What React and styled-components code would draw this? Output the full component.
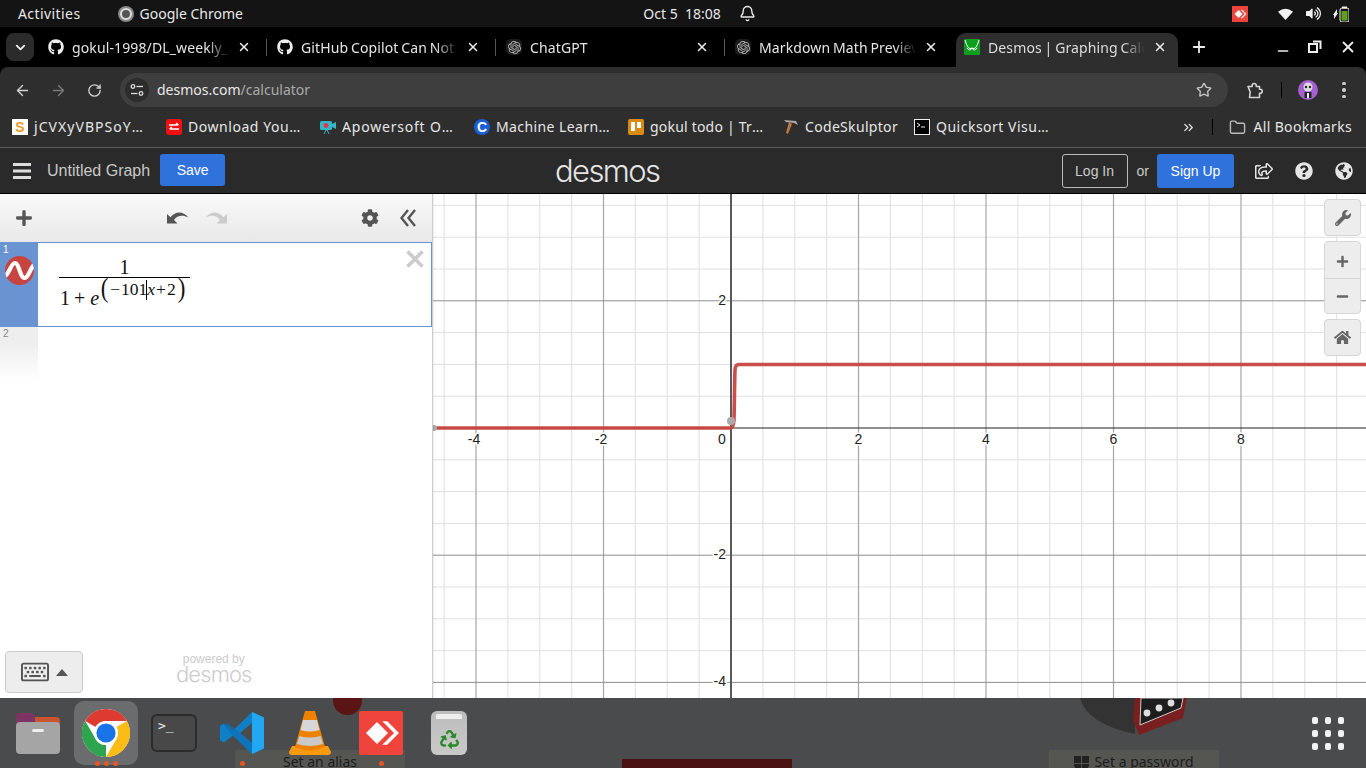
import React from 'react';
import styled, { createGlobalStyle } from 'styled-components';
import { FaGithub, FaPlus, FaWrench, FaMinus, FaHome, FaRegShareSquare, FaQuestionCircle, FaGlobeAmericas, FaRegKeyboard, FaVolumeUp, FaRecycle, FaCog } from 'react-icons/fa';
import { SiOpenai } from 'react-icons/si';
import { ArrowLeft, ArrowRight, RotateCw, Star, ChevronDown, X, Plus, Minus, ChevronsRight, Folder, Bell } from 'lucide-react';

const Global = createGlobalStyle`
  html, body { margin: 0; padding: 0; width: 1366px; height: 768px; overflow: hidden; background: #000; }
  * { box-sizing: border-box; }
  #root { width: 1366px; height: 768px; }
`;

const UI = '"Noto Sans", "Open Sans", sans-serif';
const AR = '"Liberation Sans", Arial, sans-serif';

const Screen = styled.div`
  width: 1366px; height: 768px; display: flex; flex-direction: column; font-family: ${UI};
`;

/* GNOME top bar */
const TopBar = styled.div`
  height: 27px; background: #141414; color: #e8e8e8; font-size: 14px; display: grid;
  grid-template-columns: 1fr auto 1fr; align-items: center; padding: 0 17px 0 18px;
`;
const TopLeft = styled.div`display: flex; align-items: center; gap: 37px;`;
const Activities = styled.span`letter-spacing: .42px;`;
const AppName = styled.div`display: flex; align-items: center; gap: 6px;`;
const ChromeMono = styled.span`
  width: 16px; height: 16px; border-radius: 50%; background: #888; display: flex; align-items: center; justify-content: center;
  &::after { content: ''; width: 8px; height: 8px; border-radius: 50%; border: 2px solid #ddd; background: #555; }
`;
const Clock = styled.div`display: flex; align-items: center; gap: 18px; padding-left: 32px;`;
const Tray = styled.div`display: flex; align-items: center; justify-content: flex-end; color: #f2f2f2;`;
const TrayBadge = styled.span`
  width: 16px; height: 16px; background: #ef443b; display: flex; align-items: center; justify-content: center; margin-right: 29px;
`;
const TrayIcon = styled.span`display: flex; width: 16px; justify-content: center; margin-right: 12px;`;

/* Tab strip */
const TabStrip = styled.div`
  height: 40px; background: #000; display: flex; padding-left: 6px; color: #e6e6e6;
`;
const TabMenu = styled.div`
  width: 28px; height: 28px; margin-top: 6px; margin-right: 6px; border-radius: 8px; background: #2b2b2b;
  display: flex; align-items: center; justify-content: center; color: #eee;
`;
const Tab = styled.div`
  width: 229px; height: 40px; padding: 0 7px 0 8px; display: flex; align-items: center; position: relative; flex: none;
  ${p => p.$sep && `&::after { content: ''; position: absolute; left: 226px; top: 12px; width: 1px; height: 17px; background: #555; }`}
`;
const ActiveTab = styled(Tab)`
  width: 222px; height: 34px; margin-top: 6px; padding-bottom: 6px; background: #2e2e2e; border-radius: 10px 10px 0 0; color: #ddd;
`;
const Fav = styled.span`
  width: 16px; height: 16px; flex: none; display: flex; align-items: center; justify-content: center; color: ${p => p.$c || '#eee'};
  background: ${p => p.$bg || 'transparent'}; border-radius: 5px;
`;
const TabTitle = styled.span`
  margin-left: 8px; width: 157px; font-size: 14px; letter-spacing: .12px; word-spacing: -1px; white-space: nowrap; overflow: hidden;
  mask-image: linear-gradient(to right, #000 86%, transparent 100%);
`;
const TabClose = styled.span`display: flex; margin-left: 7px; color: #eee; width: 16px; justify-content: center;`;
const StripRight = styled.div`
  flex: 1; display: flex; align-items: center; color: #eee;
`;
const NewTab = styled.span`display: flex; margin-left: 12px;`;
const WinBtns = styled.div`
  margin-left: auto; display: flex; align-items: center; gap: 17px; padding-right: 9px;
`;
const MinIcon = styled.span`display: flex; padding-top: 7px;`;

/* Toolbar */
const Toolbar = styled.div`
  height: 40px; background: #2e2e2e; display: flex; align-items: flex-end; padding: 0 4px 0 12px; border-radius: 8px 8px 0 0; color: #c8c8c8;
`;
const NavBtn = styled.span`
  width: 20px; height: 34px; margin-right: 16px; display: flex; align-items: center; justify-content: center;
  color: ${p => p.$dim ? '#777' : '#cfcfcf'};
`;
const Omni = styled.div`
  width: 1108px; height: 34px; background: #3e3e3e; border-radius: 17px; display: flex; align-items: center; padding-left: 5px; font-size: 14px;
  color: #e8e8e8;
`;
const TuneWrap = styled.span`
  width: 24px; height: 24px; border-radius: 50%; background: #2c2c2c; display: flex; align-items: center; justify-content: center; margin-right: 8px;
`;
const UrlText = styled.span`padding-bottom: 2px;`;
const UrlDim = styled.span`color: #aaa;`;
const OmniStar = styled.span`margin-left: auto; margin-right: 16px; display: flex; color: #c8c8c8;`;
const TbRight = styled.div`flex: 1; height: 34px; display: flex; align-items: center; padding-left: 18px;`;
const TbSep = styled.span`width: 1px; height: 16px; background: #000; margin: 0 16px 0 18px;`;
const Avatar = styled.span`
  width: 20px; height: 20px; border-radius: 50%; background: #a45fd0; display: flex; align-items: center; justify-content: center; flex: none; overflow: hidden;
`;
const Dots = styled.span`
  display: flex; flex-direction: column; gap: 3px; margin-left: 24px;
  & i { width: 3.5px; height: 3.5px; border-radius: 50%; background: #ccc; display: block; }
`;

/* Bookmarks */
const BookBar = styled.div`
  height: 41px; background: #2e2e2e; border-bottom: 1px solid #5a5a5a; display: flex; align-items: center; padding-left: 12px; color: #e6e6e6; font-size: 14px; letter-spacing: .32px;
`;
const BM = styled.div`
  width: ${p => p.$w}px; flex: none; display: flex; align-items: center; gap: 6px; white-space: nowrap;
`;
const BMText = styled.span`padding-bottom: 2px; letter-spacing: ${p => p.$ls || .32}px;`;
const Ell = styled.span`letter-spacing: 1.6px;`;
const BMIcon = styled.span`
  width: 16px; height: 16px; flex: none; display: flex; align-items: center; justify-content: center;
  background: ${p => p.$bg || 'transparent'}; color: ${p => p.$c || '#fff'}; border-radius: ${p => p.$r || '0'};
  font: bold 14px ${AR}; letter-spacing: 0; overflow: hidden;
`;
const BMRight = styled.div`
  margin-left: auto; display: flex; align-items: center; padding-right: 14px;
`;
const BMSep = styled.span`width: 1px; height: 16px; background: #000; margin: 0 16px 0 16px;`;
const BMAll = styled.span`margin-left: 8px; padding-bottom: 2px;`;

/* Desmos header */
const DHeader = styled.div`
  height: 46px; background: #2a2a2a; border-bottom: 1px solid #000; display: grid; grid-template-columns: 542px auto 1fr; align-items: center; font-family: ${AR};
  padding: 0 13px; color: #ddd; flex: none;
`;
const DLeft = styled.div`display: flex; align-items: center;`;
const Burger = styled.span`display: flex; margin-right: 16px;`;
const Untitled = styled.span`font-size: 16px; color: #c8c8c8; margin-right: 10px;`;
const BlueBtn = styled.span`
  height: ${p => p.$h}px; width: ${p => p.$w}px; background: #2f72dc; border-radius: 3px; color: #fff; font-size: 14px;
  display: flex; align-items: center; justify-content: center; margin-bottom: ${p => p.$up || 0}px;
`;
const Logo = styled.span`
  font-family: Inter, Lato, sans-serif; font-weight: 300; color: ${p => p.$c || '#e4e4e4'}; font-size: ${p => p.$s}px; line-height: ${p => p.$lh || 1};
  letter-spacing: ${p => p.$ls}px;
`;
const DRight = styled.div`display: flex; align-items: center; justify-content: flex-end;`;
const LoginBtn = styled.span`
  width: 66px; height: 34px; border: 1px solid #bbb; border-radius: 3px; font-size: 14px; color: #ccc; display: flex; align-items: center; justify-content: center;
`;
const Or = styled.span`font-size: 14px; color: #ccc; margin: 0 8px 0 9px;`;
const HIcon = styled.span`display: flex; color: #e6e6e6; margin-left: ${p => p.$ml}px;`;

/* Main */
const Main = styled.div`flex: 1; min-height: 0; display: flex; background: #fff; font-family: ${AR};`;
const Panel = styled.div`
  width: 433px; flex: none; border-right: 1px solid #ccc; display: flex; flex-direction: column; position: relative; background: #fff;
  box-shadow: 1px 0 2px rgba(0,0,0,.08); z-index: 1;
`;
const PTools = styled.div`
  height: 48px; background: linear-gradient(#fafafa, #e8e8e8); display: flex; align-items: center; padding: 0 0 1px 15px; color: #555; flex: none;
`;
const UndoGroup = styled.div`display: flex; gap: 16px; margin-left: 134px;`;
const PToolsRight = styled.div`margin-left: auto; display: flex; align-items: center; gap: 21px; padding-right: 16px;`;
const ExprRow = styled.div`
  height: 85px; border: 1.5px solid #6a94d1; display: flex; flex: none; position: relative;
`;
const Gutter = styled.div`
  width: 37px; background: #6a94d1; color: #fff; font-size: 10px; padding: 1px 0 0 2px; position: relative; flex: none;
`;
const GraphSwatch = styled.span`position: absolute; left: 3px; top: 12px; display: flex;`;
const MathWrap = styled.div`
  padding: 11px 0 0 21px; font-family: "Liberation Serif", "Times New Roman", serif; color: #111; font-size: 20px;
`;
const Frac = styled.div`display: inline-flex; flex-direction: column; align-items: center; width: 131px;`;
const Num = styled.div`line-height: 27px; border-bottom: 1px solid #000; width: 100%; text-align: center; height: 24px;`;
const Den = styled.div`display: flex; align-items: flex-start; padding: 0 0 0 1px; width: 100%; height: 36px; white-space: nowrap;`;
const DenBase = styled.span`margin-top: 9px; line-height: 23px; display: flex;`;
const Op = styled.span`margin: ${p => p.$m};`;
const Sup = styled.span`font-size: 17.5px; line-height: 20px; margin-top: 1px; display: inline-flex; align-items: center; position: relative;`;
const Paren = styled.span`
  font-size: 27px; line-height: 20px; margin: ${p => p.$m}; transform: scaleX(.85) translateY(-1px); display: inline-block;
`;
const Caret = styled.span`display: inline-block; width: 1px; height: 20px; background: #000; margin: 0 0 0 -1px; position: relative; top: 1px;`;
const DelBtn = styled.span`position: absolute; right: 7px; top: 7px; display: flex;`;
const EmptyRow = styled.div`height: 54px; display: flex; flex: none;`;
const EmptyGutter = styled.div`
  width: 38px; background: linear-gradient(#eee 30%, #fff); color: #888; font-size: 10px; padding: 1px 0 0 3px;
`;
const PFoot = styled.div`
  margin-top: auto; height: 53px; display: flex; align-items: flex-start; padding: 6px 0 0 5px;
`;
const KeyBtn = styled.div`
  width: 78px; height: 42px; background: #ededed; border: 1px solid #ccc; border-radius: 4px; display: flex; align-items: center; justify-content: center; gap: 7px; color: #555;
`;
const Tri = styled.span`
  width: 0; height: 0; border-left: 6.5px solid transparent; border-right: 6.5px solid transparent; border-bottom: 7px solid #555;
`;
const Powered = styled.div`
  margin-left: 93px; padding-top: 2px; display: flex; flex-direction: column; align-items: center; color: #ccc; font-size: 12px; line-height: 13px;
`;

const Graph = styled.div`flex: 1; position: relative; overflow: hidden;`;
const GraphSvg = styled.svg`display: block; position: absolute; left: 0; top: 0;`;
const Ctl = styled.div`
  position: absolute; right: 5px; top: ${p => p.$t}px; width: 37px; height: ${p => p.$h}px; background: #ededed; border: 1px solid #d6d6d6; border-radius: 4px;
  color: #666; display: flex; flex-direction: column;
`;
const CtlCell = styled.span`
  flex: 1; display: flex; align-items: center; justify-content: center; padding-top: ${p => p.$pt || 0}px;
  & + & { border-top: 1px solid #d6d6d6; }
`;

/* Dock */
const Dock = styled.div`
  height: 70px; flex: none; background: #4a4b4d; display: flex; align-items: center; padding-left: 4px; position: relative; overflow: hidden;
`;
const DockItem = styled.div`
  width: 68px; height: 64px; flex: none; margin-left: ${p => p.$ml || 0}px; display: flex; align-items: center; justify-content: center; position: relative; z-index: 1;
`;
const ActiveBg = styled.span`position: absolute; left: 2px; top: 0; width: 64px; height: 64px; border-radius: 10px; background: #6b6c6e;`;
const LogoLift = styled.span`position: relative; display: flex;`;
const Pips = styled.span`
  position: absolute; bottom: -1px; left: 0; right: 0; display: flex; justify-content: center; gap: 4px;
  & i { width: 5px; height: 5px; background: #e95420; border-radius: 50%; display: block; }
`;
const AppGrid = styled.div`
  margin-left: auto; margin-right: 22px; display: grid; grid-template-columns: repeat(3, 6px); grid-auto-rows: 7px; gap: 6px 7px; position: relative; z-index: 1;
  & i { background: #f2f2f2; border-radius: 2px; display: block; }
`;
const GhostBox = styled.div`
  position: absolute; left: ${p => p.$l}px; top: ${p => p.$t}px; width: 170px; height: 40px; background: ${p => p.$bg || '#555652'}; color: #1c1c1c;
  font: 14px ${UI}; display: flex; justify-content: center; gap: 5px; padding-top: 2px;
`;
const GhostBlob = styled.span`
  position: absolute; left: 333px; top: -12px; width: 29px; height: 29px; border-radius: 50%; background: #5a1414;
`;
const GhostShield = styled.svg`position: absolute; left: 1075px; top: 0;`;
const GhostShieldIcon = styled.svg`margin-top: 4px;`;

const xs = []; for (let i = -9; i <= 20; i++) xs.push(i);
const ux = v => 298 + v * 63.75;
const uy = v => 234 - v * 63.6;

function Plot() {
  const W = 933, H = 504;
  return (
    <GraphSvg width={W} height={H} viewBox={`0 0 ${W} ${H}`}>
      {xs.map(i => i % 4 !== 0 && <line key={'vm' + i} x1={ux(i / 2)} x2={ux(i / 2)} y1="0" y2={H} stroke="#e4e4e4" strokeWidth="1.2" />)}
      {xs.map(i => i % 4 !== 0 && <line key={'hm' + i} y1={uy(i / 2)} y2={uy(i / 2)} x1="0" x2={W} stroke="#e0e0e0" strokeWidth="1" />)}
      {[-4, -2, 2, 4, 6, 8].map(v => <line key={'vM' + v} x1={ux(v)} x2={ux(v)} y1="0" y2={H} stroke="#a6a6a6" strokeWidth="1.2" />)}
      {[4, 2, -2, -4].map(v => <line key={'hM' + v} y1={uy(v)} y2={uy(v)} x1="0" x2={W} stroke="#8f8f8f" strokeWidth="1" />)}
      <line x1="0" x2={W} y1="234" y2="234" stroke="#222" strokeWidth="1.2" />
      <line x1="298" x2="298" y1="0" y2={H} stroke="#5a5a5a" strokeWidth="2" />
      <path d="M0 234H297.5C299.5 234 300.5 232 301 226C301.5 205 301.5 190 302 176C302.2 171.5 303.5 170.5 306 170.5H933" fill="none" stroke="#c74440" strokeWidth="3.6" opacity=".95" />
      <circle cx="298" cy="227" r="4" fill="#aaa" />
      <circle cx="1" cy="234" r="3" fill="#aaa" />
      <g fontFamily={AR} fontSize="14" fill="#222" stroke="#fff" strokeWidth="3" paintOrder="stroke" strokeLinejoin="round">
        {[[-4, 41], [-2, 168], [0, 289], [2, 425.5], [4, 553], [6, 680.5], [8, 808]].map(([v, x]) => (
          <text key={v} x={x} y="250" textAnchor="middle">{v}</text>
        ))}
        <text x="293" y="111" textAnchor="end">2</text>
        <text x="293" y="365" textAnchor="end">-2</text>
        <text x="293" y="492" textAnchor="end">-4</text>
      </g>
    </GraphSvg>
  );
}

const Swatch = () => (
  <svg width="31" height="31" viewBox="0 0 31 31">
    <defs><clipPath id="cc"><circle cx="15.5" cy="15.5" r="14.5" /></clipPath></defs>
    <circle cx="15.5" cy="15.5" r="14.5" fill="#c74440" />
    <path d="M0 22C5 20 7 8 11 8C15 8 16 23 20.5 23C25 23 26 12 31 9" fill="none" stroke="#fff" strokeWidth="4.2" clipPath="url(#cc)" />
  </svg>
);

const CHROME_RED = 'M24 0A24 24 0 0 1 44.8 12H24A12 12 0 0 0 13.6 18L3.2 12A24 24 0 0 1 24 0Z';
const ChromeLogo = () => (
  <svg width="48" height="48" viewBox="0 0 48 48">
    <circle cx="24" cy="24" r="24" fill="#fff" />
    <path d={CHROME_RED} fill="#dd3b30" />
    <path d={CHROME_RED} fill="#fbbc15" transform="rotate(120 24 24)" />
    <path d={CHROME_RED} fill="#2ea44f" transform="rotate(240 24 24)" />
    <circle cx="24" cy="24" r="12" fill="#fff" />
    <circle cx="24" cy="24" r="9.6" fill="#1a73e8" />
  </svg>
);

const FilesIcon = () => (
  <svg width="46" height="42" viewBox="0 0 46 42">
    <path d="M1 5Q1 1 5 1H17L21 5H41Q45 5 45 9V20H1Z" fill="#7d3464" />
    <path d="M20 5H41Q45 5 45 9V16H20Z" fill="#c8552f" />
    <rect x="1" y="10" width="44" height="32" rx="4" fill="#a5a5a5" />
    <rect x="17" y="17" width="12" height="3" rx="1.5" fill="#eee" />
  </svg>
);

const Terminal = styled.div`
  width: 46px; height: 38px; border-radius: 6px; background: #484848; border: 2px solid #2b2b2b; color: #eee; font: 13px/13px "DejaVu Sans Mono", monospace; padding: 3px 0 0 5px; white-space: pre;
`;

const VSCode = () => (
  <svg width="44" height="44" viewBox="0 0 44 44">
    <path d="M32 1L44 6.5V37.5L32 43L13 24.5L4 31.5L0 29.5V14.5L4 12.5L13 19.5Z" fill="#0f7fc8" />
    <path d="M32 1L44 6.5V37.5L32 43Z" fill="#22a7f2" />
    <path d="M32 12L20 22L32 32Z" fill="#4a4b4d" />
    <path d="M4 14L8 12L32 32V43L13 25Z" fill="#0e6fb4" opacity=".7" />
  </svg>
);

const VLC = () => (
  <svg width="42" height="46" viewBox="0 0 42 46">
    <path d="M3 36L0 42Q0 45 3 45H39Q42 45 42 42L39 36Z" fill="#f79a0f" />
    <path d="M16 1H26L36 37Q21 44 6 37Z" fill="#ef8100" />
    <path d="M14 10H28L30.5 20Q21 23 11.5 20Z" fill="#d7d7d7" />
    <path d="M10.5 26Q21 29 31.5 26L34 34Q21 38 8 34Z" fill="#c9c9c9" />
  </svg>
);

const AnyDesk = ({ s = 44 }) => (
  <svg width={s} height={s} viewBox="0 0 44 44">
    <rect width="44" height="44" rx="2" fill="#ef443b" />
    <path d="M7 22L18 11L29 22L18 33Z" fill="#fff" />
    <path d="M25 11L36 22L25 33L28 33L39 22L28 11Z" fill="#fff" stroke="#fff" strokeWidth="1.4" />
  </svg>
);

const Trash = styled.div`
  width: 36px; height: 44px; border-radius: 6px; background: linear-gradient(#bdbdbd, #c9c9c9); position: relative; display: flex; align-items: center; justify-content: center; padding-top: 12px; color: #2a8a2a;
  &::before { content: ''; position: absolute; left: 5px; right: 5px; top: 3px; height: 5px; background: #eee; border-radius: 2px 2px 0 0; }
`;

function Tune() {
  return (
    <svg width="14" height="14" viewBox="0 0 14 14" fill="none" stroke="#ddd" strokeWidth="1.3">
      <circle cx="3" cy="3.5" r="1.8" /><path d="M6.5 3.5H13" />
      <circle cx="11" cy="10.5" r="1.8" /><path d="M1 10.5H7.5" />
    </svg>
  );
}

const UndoSvg = styled.svg`transform: ${p => p.$flip ? 'scaleX(-1)' : 'none'};`;
const Undo = ({ c, flip }) => (
  <UndoSvg $flip={flip} width="22" height="13" viewBox="0 0 22 13">
    <path d="M0 12.5V3L3.5 6.3C8 1 15 -1 21.5 6.5C16 4 10.5 4 7 9L10.5 12.5Z" fill={c} />
  </UndoSvg>
);

const tabs = [
  { t: 'gokul-1998/DL_weekly_', i: <FaGithub size={16} /> },
  { t: 'GitHub Copilot Can Not', i: <FaGithub size={16} /> },
  { t: 'ChatGPT', i: <SiOpenai size={13} color="#bbb" />, bg: '#1c1c1c' },
  { t: 'Markdown Math Preview', i: <SiOpenai size={13} color="#bbb" />, bg: '#1c1c1c' },
];

const marks = [
  { w: 154, t: 'jCVXyVBPSoY', ls: 1.05, ic: <BMIcon $bg="#fff" $c="#ef9a1d">S</BMIcon> },
  { w: 154, t: 'Download You', ls: .55, ic: <BMIcon $bg="#ee1111" $r="3px"><svg width="12" height="10" viewBox="0 0 12 10" fill="none" stroke="#fff" strokeWidth="1.3"><path d="M1 3H10M8 1L10.5 3M11 7H2M4 5L1.5 7" /></svg></BMIcon> },
  { w: 154, t: 'Apowersoft O', ls: .8, ic: <BMIcon><svg width="16" height="16" viewBox="0 0 16 16"><rect x="0" y="2" width="12" height="9" rx="1.5" fill="#34b6c4" /><path d="M12 5L16 3V10L12 8Z" fill="#34b6c4" /><circle cx="6" cy="6.5" r="2.4" fill="#e8344e" /><path d="M4 15L6 11H7L9 15" stroke="#34b6c4" fill="none" /></svg></BMIcon> },
  { w: 154, t: 'Machine Learn', ls: .4, ic: <BMIcon $bg="#1a5fd8" $r="50%">C</BMIcon> },
  { w: 155, t: 'gokul todo | Tr', ls: .2, ic: <BMIcon $bg="#d98a14" $r="2px"><svg width="12" height="12" viewBox="0 0 12 12" fill="#fff"><rect x="1" y="1" width="4" height="9" /><rect x="7" y="1" width="4" height="6" /></svg></BMIcon> },
  { w: 131, t: 'CodeSkulptor', plain: true, ic: <BMIcon><svg width="16" height="16" viewBox="0 0 16 16"><path d="M6 3L9 5L5 15L3 14Z" fill="#c0763a" /><path d="M1 1L13 2L15 6L11 4L3 3Z" fill="#a9a9a9" /></svg></BMIcon> },
  { w: 150, t: 'Quicksort Visu', ls: .5, ic: <BMIcon $bg="#000"><svg width="16" height="16" viewBox="0 0 16 16" fill="none" stroke="#eee"><rect x=".5" y=".5" width="15" height="15" /><path d="M3 4L6 6L3 8M7 8H11" /></svg></BMIcon> },
];

export default function App() {
  return (
    <Screen>
      <Global />
      <TopBar>
        <TopLeft>
          <Activities>Activities</Activities>
          <AppName><ChromeMono />Google Chrome</AppName>
        </TopLeft>
        <Clock>
          <span>Oct 5&nbsp;&nbsp;18:08</span>
          <Bell size={17} />
        </Clock>
        <Tray>
          <TrayBadge><AnyDesk s={16} /></TrayBadge>
          <TrayIcon>
            <svg width="15" height="12" viewBox="0 0 15 12"><path d="M0 3.8Q7.5 -2.2 15 3.8L7.5 12Z" fill="#f2f2f2" /></svg>
          </TrayIcon>
          <TrayIcon><FaVolumeUp size={15} /></TrayIcon>
          <svg width="16" height="16" viewBox="0 0 16 16">
            <path d="M0 9L4 3V7H5L1 13V9Z" fill="#eee" />
            <rect x="7" y="2" width="9" height="14" rx="2" fill="none" stroke="#eee" />
            <rect x="9" y="0.5" width="5" height="2" fill="#eee" />
            <rect x="8.5" y="5" width="6" height="9.5" fill="#5f9e1a" />
          </svg>
        </Tray>
      </TopBar>

      <TabStrip>
        <TabMenu><ChevronDown size={15} strokeWidth={3} /></TabMenu>
        {tabs.map((t, i) => (
          <Tab key={t.t} $sep={i < 3}>
            <Fav $bg={t.bg}>{t.i}</Fav>
            <TabTitle>{t.t}</TabTitle>
            <TabClose><X size={14} strokeWidth={2.5} /></TabClose>
          </Tab>
        ))}
        <ActiveTab>
          <Fav>
            <svg width="16" height="16" viewBox="0 0 16 16"><rect width="16" height="16" rx="1" fill="#0d9e1f" /><path d="M1 1Q4 12 8 9Q12 12 15 1M3 9Q6 13 8 9Q10 13 13 9" stroke="#fff" fill="none" strokeWidth="1" /></svg>
          </Fav>
          <TabTitle>Desmos | Graphing Calculator</TabTitle>
          <TabClose><X size={14} strokeWidth={2.5} /></TabClose>
        </ActiveTab>
        <StripRight>
          <NewTab><Plus size={18} strokeWidth={2.4} /></NewTab>
          <WinBtns>
            <MinIcon><Minus size={16} strokeWidth={2} /></MinIcon>
            <svg width="14" height="14" viewBox="0 0 14 14" fill="none" stroke="#eee" strokeWidth="2"><rect x="1" y="4" width="8" height="8" /><path d="M5 1.5H12.5V9" /></svg>
            <X size={18} strokeWidth={2.4} />
          </WinBtns>
        </StripRight>
      </TabStrip>

      <Toolbar>
        <NavBtn><ArrowLeft size={17} /></NavBtn>
        <NavBtn $dim><ArrowRight size={17} /></NavBtn>
        <NavBtn><RotateCw size={15} strokeWidth={2.2} /></NavBtn>
        <Omni>
          <TuneWrap><Tune /></TuneWrap>
          <UrlText>desmos.com<UrlDim>/calculator</UrlDim></UrlText>
          <OmniStar><Star size={16} /></OmniStar>
        </Omni>
        <TbRight>
          <svg width="17" height="17" viewBox="0 0 17 17" fill="none" stroke="#d4d4d4" strokeWidth="1.6" strokeLinejoin="round">
            <path d="M2 4.5H6.2V3.5A2 2 0 0 1 10.2 3.5V4.5H13.5V7.3H14.2A2 2 0 0 1 14.2 11.3H13.5V15.5H3.5L4.2 10Z" />
          </svg>
          <TbSep />
          <Avatar>
            <svg width="14" height="16" viewBox="0 0 14 16"><circle cx="7" cy="5" r="4.5" fill="#ddd" /><circle cx="5" cy="5" r="1.2" fill="#222" /><circle cx="9" cy="5" r="1.2" fill="#222" /><rect x="3.5" y="10" width="7" height="6" fill="#222" /><rect x="6" y="11" width="2" height="5" fill="#eee" /></svg>
          </Avatar>
          <Dots><i /><i /><i /></Dots>
        </TbRight>
      </Toolbar>

      <BookBar>
        {marks.map(m => (
          <BM key={m.t} $w={m.w}>{m.ic}<BMText $ls={m.ls}>{m.t}{!m.plain && <Ell>…</Ell>}</BMText></BM>
        ))}
        <BMRight>
          <ChevronsRight size={15} />
          <BMSep />
          <Folder size={17} color="#bbb" />
          <BMAll>All Bookmarks</BMAll>
        </BMRight>
      </BookBar>

      <DHeader>
        <DLeft>
          <Burger>
            <svg width="18" height="16" viewBox="0 0 18 16" fill="#ddd"><rect width="18" height="3" y="0" /><rect width="18" height="3" y="6.5" /><rect width="18" height="3" y="13" /></svg>
          </Burger>
          <Untitled>Untitled Graph</Untitled>
          <BlueBtn $w={65} $h={32} $up={2}>Save</BlueBtn>
        </DLeft>
        <Logo $s={31} $ls={-1.6}>desmos</Logo>
        <DRight>
          <LoginBtn>Log In</LoginBtn>
          <Or>or</Or>
          <BlueBtn $w={77} $h={34}>Sign Up</BlueBtn>
          <HIcon $ml={21}><FaRegShareSquare size={18} /></HIcon>
          <HIcon $ml={22}><FaQuestionCircle size={18} /></HIcon>
          <HIcon $ml={22}><FaGlobeAmericas size={18} /></HIcon>
        </DRight>
      </DHeader>

      <Main>
        <Panel>
          <PTools>
            <FaPlus size={18} />
            <UndoGroup>
              <Undo c="#555" />
              <Undo c="#ccc" flip />
            </UndoGroup>
            <PToolsRight>
              <FaCog size={18} />
              <svg width="16" height="18" viewBox="0 0 16 18" fill="none" stroke="#555" strokeWidth="2.4"><path d="M8 1L1.5 9L8 17M15 1L8.5 9L15 17" /></svg>
            </PToolsRight>
          </PTools>
          <ExprRow>
            <Gutter>1<GraphSwatch><Swatch /></GraphSwatch></Gutter>
            <MathWrap>
              <Frac>
                <Num>1</Num>
                <Den>
                  <DenBase>1<Op $m="0 5px 0 4px">+</Op><i>e</i></DenBase>
                  <Sup>
                    <Paren $m="0 1px 0 1px">(</Paren><Op $m="0 1px 0 0">−</Op>101<Caret /><i>x</i><Op $m="0 1px">+</Op>2<Paren $m="0 0 0 1px">)</Paren>
                  </Sup>
                </Den>
              </Frac>
            </MathWrap>
            <DelBtn>
              <svg width="18" height="18" viewBox="0 0 18 18" stroke="#ccc" strokeWidth="3.6"><path d="M1.5 1.5L16.5 16.5M16.5 1.5L1.5 16.5" /></svg>
            </DelBtn>
          </ExprRow>
          <EmptyRow><EmptyGutter>2</EmptyGutter></EmptyRow>
          <PFoot>
            <KeyBtn><FaRegKeyboard size={28} /><Tri /></KeyBtn>
            <Powered>
              powered by
              <Logo $s={22} $ls={-.9} $lh={.8} $c="#ccc">desmos</Logo>
            </Powered>
          </PFoot>
        </Panel>
        <Graph>
          <Plot />
          <Ctl $t={5} $h={37}><CtlCell><FaWrench size={16} /></CtlCell></Ctl>
          <Ctl $t={47} $h={73}>
            <CtlCell $pt={3}><FaPlus size={13} /></CtlCell>
            <CtlCell $pt={1}><FaMinus size={13} /></CtlCell>
          </Ctl>
          <Ctl $t={125} $h={37}><CtlCell><FaHome size={17} /></CtlCell></Ctl>
        </Graph>
      </Main>

      <Dock>
        <GhostBox $l={235} $t={52}>Set an alias</GhostBox>
        <GhostBlob />
        <GhostBox $l={622} $t={61} $bg="#4a1212" />
        <GhostBox $l={1049} $t={52}>
          <GhostShieldIcon width="15" height="16" viewBox="0 0 15 16"><path d="M0 0H7V7H0ZM8 0H15V7H8ZM0 8H7V15Q2 14 0 10ZM8 8H15V10Q13 14 8 15Z" fill="#222" /></GhostShieldIcon>
          Set a password
        </GhostBox>
        <GhostShield width="120" height="38" viewBox="0 0 120 38">
          <path d="M5 0Q12 26 60 36V0Z" fill="#333" />
          <path d="M60 0L58 22L64 37L108 20L112 0Z" fill="#7a1f1f" />
          <path d="M66 0L65 27L106 10L108 0Z" fill="#1d1d1d" stroke="#ccc" />
          <g fill="#ddd">
            {[72, 84, 96].map((x, i) => <circle key={x} cx={x} cy={15 - i * 5} r="3.4" />)}
          </g>
        </GhostShield>
        <DockItem><FilesIcon /></DockItem>
        <DockItem>
          <ActiveBg />
          <LogoLift><ChromeLogo /></LogoLift>
          <Pips><i /><i /><i /></Pips>
        </DockItem>
        <DockItem><Terminal>{'>_'}</Terminal></DockItem>
        <DockItem><VSCode /><Pips><i /></Pips></DockItem>
        <DockItem><VLC /></DockItem>
        <DockItem $ml={3}><AnyDesk /><Pips><i /></Pips></DockItem>
        <DockItem><Trash><FaRecycle size={19} /></Trash></DockItem>
        <AppGrid>{Array.from({ length: 9 }, (_, i) => <i key={i} />)}</AppGrid>
      </Dock>
    </Screen>
  );
}
